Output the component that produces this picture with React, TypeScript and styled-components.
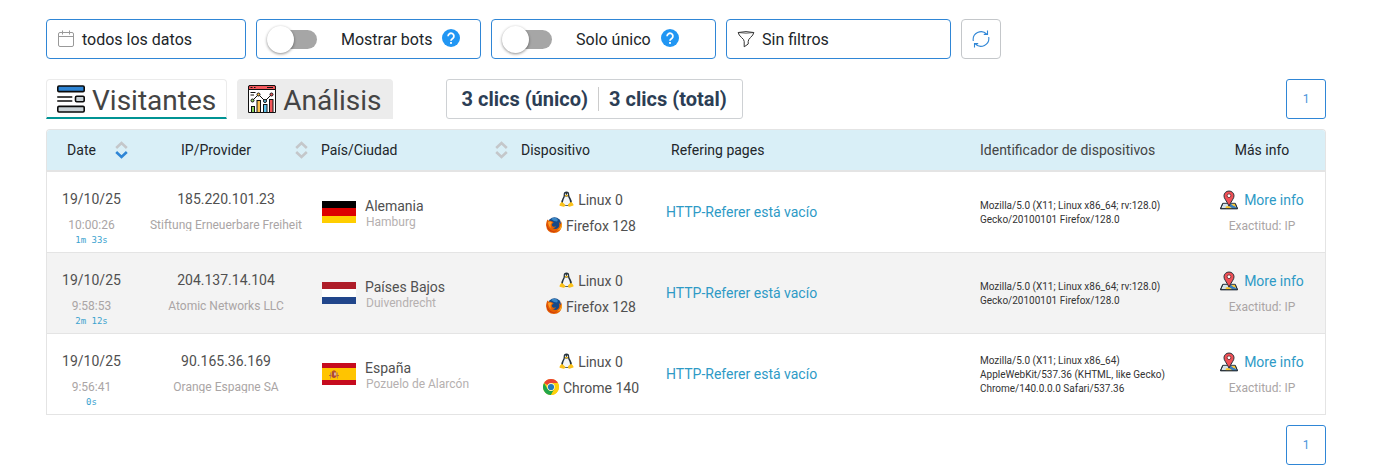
import React from "react";
import styled, { createGlobalStyle, css } from "styled-components";

const GlobalStyle = createGlobalStyle`
  *, *::before, *::after { box-sizing: border-box; }
  body {
    margin: 0;
    background: #fff;
    color: #505050;
    font-family: Roboto, "Liberation Sans", sans-serif;
    font-size: 14px;
  }
  button, input { font: inherit; }
  svg { display: block; flex: none; }
`;

const Page = styled.main`
  display: flex;
  flex-direction: column;
  padding: 19px 52px 10px 46px;
`;

const Toolbar = styled.div`
  display: flex;
  gap: 10px;
`;

const field = css`
  display: flex;
  align-items: center;
  height: 40px;
  border: 1px solid #2f86d6;
  border-radius: 4px;
  background: #fff;
  color: #212529;
  font-size: 16px;
`;

const FieldButton = styled.button<{ $width: number }>`
  ${field}
  width: ${(p) => p.$width}px;
  gap: 7px;
  padding: 0 10px;
  cursor: pointer;
`;

const SwitchField = styled.div`
  ${field}
  width: 225px;
  padding: 0 12px;
`;

const SwitchLabel = styled.label`
  display: flex;
  align-items: center;
  gap: 24px;
  cursor: pointer;
`;

const Switch = styled.input`
  appearance: none;
  position: relative;
  width: 48px;
  height: 19px;
  margin: 0;
  border-radius: 10px;
  background: #a6a6a6;
  cursor: pointer;

  &::before {
    content: "";
    position: absolute;
    top: -4px;
    left: -2px;
    width: 27px;
    height: 27px;
    border-radius: 50%;
    background: #fff;
    box-shadow: 0 1px 3px rgba(0, 0, 0, 0.45);
  }
  &:checked { background: #2f86d6; }
  &:checked::before { left: 23px; }
`;

const HelpButton = styled.button`
  margin: 0 0 2px 10px;
  padding: 0;
  border: 0;
  background: none;
  cursor: pointer;
`;

const RefreshButton = styled.button`
  display: grid;
  place-items: center;
  width: 40px;
  height: 40px;
  padding: 0;
  border: 1px solid #c4c7ca;
  border-radius: 4px;
  background: #fff;
  cursor: pointer;
`;

const ViewBar = styled.div`
  display: flex;
  align-items: center;
  gap: 10px;
  margin: 20px 0 10px;
`;

const Tab = styled.button<{ $active?: boolean }>`
  display: flex;
  align-items: center;
  gap: 7px;
  height: 40px;
  padding: 0 10px;
  border: 1px solid ${(p) => (p.$active ? "#ebebeb" : "#ececec")};
  border-bottom: 2px solid ${(p) => (p.$active ? "#009494" : "#ececec")};
  border-radius: 4px 4px 0 0;
  background: ${(p) => (p.$active ? "#fff" : "#ececec")};
  color: #444;
  font-size: 28px;
  line-height: 33px;
  cursor: pointer;

  span { padding-top: 4px; }
`;

const Totals = styled.div`
  display: flex;
  align-items: center;
  height: 40px;
  margin-left: 43px;
  padding: 0 5px;
  border: 1px solid #ced1d4;
  border-radius: 3px;
  color: #2c3e55;
  font-size: 20px;
  font-weight: 700;
`;

const Total = styled.span`
  padding: 0 10px;
  line-height: 24px;
  & + & { border-left: 1px solid #ccc; }
`;

const PageLink = styled.a`
  display: grid;
  place-items: center;
  width: 40px;
  height: 40px;
  margin-left: auto;
  border: 1px solid #2f86d6;
  border-radius: 3px;
  color: #4a95dc;
  font-size: 12px;
  text-decoration: none;
`;

const Frame = styled.div`
  margin-bottom: 10px;
  border: 1px solid #e4e4e4;
  border-bottom: 0;
  border-radius: 4px 4px 0 0;
  overflow: hidden;
`;

const Table = styled.table`
  width: 100%;
  table-layout: fixed;
  border-collapse: separate;
  border-spacing: 0;
`;

const Head = styled.th<{ $width?: number; $align?: string; $soft?: boolean }>`
  width: ${(p) => (p.$width ? `${p.$width}px` : "auto")};
  height: 42px;
  padding: 0 5px;
  border-bottom: 2px solid #e4e4e4;
  background: #d9eff7;
  color: ${(p) => (p.$soft ? "#444" : "#212529")};
  font-weight: 400;
  text-align: ${(p) => p.$align || "left"};
`;

const SortButton = styled.button<{ $align?: string }>`
  display: flex;
  align-items: center;
  gap: 4px;
  width: 100%;
  padding: 0 3px 0 0;
  border: 0;
  background: none;
  color: inherit;
  cursor: pointer;

  span { flex: 1; text-align: ${(p) => p.$align || "left"}; }
`;

const Row = styled.tr`
  height: 81px;
  &:nth-child(even) { background: #f3f3f3; }
`;

const Cell = styled.td<{ $top?: number; $center?: boolean }>`
  padding: ${(p) => p.$top || 0}px 0 0;
  border-bottom: 1px solid #e4e4e4;
  vertical-align: ${(p) => (p.$top ? "top" : "middle")};
  text-align: ${(p) => (p.$center ? "center" : "left")};
`;

const Primary = styled.div`
  line-height: 26px;
`;

const Secondary = styled.div`
  height: 13px;
  margin-top: 6px;
  overflow: hidden;
  color: #aaa5a5;
  font-size: 12px;
  line-height: 14px;
  white-space: nowrap;
`;

const Duration = styled.div`
  margin-top: 2px;
  color: #3ba3cf;
  font: 9px/14px "DejaVu Sans Mono", monospace;
`;

const Place = styled.div`
  display: flex;
  align-items: center;
  gap: 9px;
  padding-left: 6px;
`;

const Country = styled.div`
  padding-top: 2px;
  line-height: 18px;
`;

const City = styled.div`
  padding-left: 1px;
  color: #b5b0b0;
  font-size: 12px;
  line-height: 14px;
`;

const IconLine = styled.div`
  display: flex;
  align-items: center;
  justify-content: center;
  gap: 4px;
  line-height: 26px;

  svg { margin-bottom: 2px; }
`;

const Link = styled.a`
  color: #2e9ac6;
  text-decoration: none;
`;

const MapLink = styled(Link)`
  display: flex;
  align-items: center;
  justify-content: center;
  gap: 6px;
  line-height: 26px;
`;

const Agent = styled.div`
  width: 200px;
  padding: 2px 0 0 5px;
  color: #333;
  font-size: 10px;
  line-height: 14px;
`;

const CalendarIcon = () => (
  <svg width="18" height="18" viewBox="0 0 18 18" fill="none" stroke="#999">
    <rect x="1.5" y="2.5" width="15" height="14" rx="1.5" />
    <path d="M1.5 6.5h15M5.5 .5v4M12.5 .5v4" />
  </svg>
);

const FunnelIcon = () => (
  <svg width="18" height="18" viewBox="0 0 18 18" fill="none" stroke="#333" strokeLinejoin="round">
    <path d="M1.200 2.500Q9 .8 16.800 2.500Q16.400 5 13.500 7.500Q11.200 9.500 11.200 11.500V14L7.200 16.800V11.500Q7.200 9.500 4.500 7.500Q1.600 5 1.200 2.500Z" />
    <path d="M1.200 2.500Q9 4 16.800 2.500" strokeWidth=".7" />
  </svg>
);

const RefreshIcon = () => (
  <svg width="18" height="20" viewBox="0 0 18 20" fill="none" stroke="#2f86d6" strokeWidth="1.100">
    <path d="M1.300 12A7.900 7.900 0 0 1 14.800 5.200M15.500 1.500V5.400H11.800M16.700 8A7.900 7.900 0 0 1 3.200 14.800M2.500 18.500V14.600H6.200" />
  </svg>
);

const HelpIcon = () => (
  <svg width="18" height="18" viewBox="0 0 18 18">
    <circle cx="9" cy="9" r="9" fill="#2196f3" />
    <path d="M6.1 7.2a2.9 2.9 0 1 1 4.6 2.3C9.600 10.200 9 10.600 9 11.800" fill="none" stroke="#fff" strokeWidth="1.8" />
    <rect x="8.100" y="13" width="1.800" height="1.900" fill="#fff" />
  </svg>
);

const ListIcon = () => (
  <svg width="28" height="28" viewBox="0 0 28 28" stroke="#0b0b0b" strokeWidth="1.6" strokeLinecap="round">
    <rect x=".8" y="1" width="26.400" height="5.600" rx="1.200" fill="#2f86d6" />
    <rect x=".8" y="21.400" width="26.400" height="5.600" rx="1.200" fill="#c9d1d5" />
    <rect x="18.500" y="11.200" width="8.700" height="5.600" rx="1.200" fill="#c9d1d5" />
    <path d="M.8 12H14.700M.8 16H14.700" />
  </svg>
);

const ChartIcon = () => (
  <svg width="28" height="28" viewBox="0 0 28 28" stroke="#111" strokeWidth="1">
    <path d="M.5 27.500V2Q.5.5 2 .5H26Q27.500.5 27.500 2V27.500Z" fill="#fff" />
    <path d="M.5 4.500V2Q.5.5 2 .5H26Q27.500.5 27.500 2V4.500Z" fill="#f4585c" />
    <path d="M2.500 2.500h2M6 2.500h1.500M19 2.500h6" />
    <path d="M2.500 7.500h5M2.500 10h3.500" />
    <rect x="3.500" y="21.500" width="3" height="6" fill="#8bd35b" />
    <rect x="9" y="15.500" width="3.500" height="12" fill="#fbc34f" />
    <rect x="15.500" y="19.500" width="3.500" height="8" fill="#5fc4ee" />
    <rect x="21.500" y="14.500" width="3.500" height="13" fill="#f4585c" />
    <path d="M4.500 15.500L10.500 9.500L17 16L23.500 9.500" fill="none" />
    <circle cx="4.500" cy="15.500" r="1.500" fill="#8bd35b" />
    <circle cx="10.500" cy="9.500" r="1.500" fill="#fbc34f" />
    <circle cx="17" cy="16" r="1.500" fill="#5fc4ee" />
    <circle cx="23.500" cy="9.500" r="1.500" fill="#f4585c" />
  </svg>
);

const SortIcon = ({ down }: { down?: boolean }) => (
  <svg width="13" height="18" viewBox="0 0 13 18" fill="none" strokeWidth="2.600">
    <path d="M1.200 7L6.500 2L11.800 7" stroke="#c4c7ca" />
    <path d="M1.200 11L6.500 16L11.800 11" stroke={down ? "#2f86d6" : "#c4c7ca"} />
  </svg>
);

const LinuxIcon = () => (
  <svg width="15" height="16" viewBox="0 0 16 17">
    <path d="M5 3.500Q5 .5 8 .5T10.800 3.500Q10.800 5.500 12.400 7.700T13.700 14L12 16H4L2.300 14Q2 10.500 3.700 8T5 3.500Z" fill="#25323c" />
    <path d="M6.200 5.500Q8 6.500 9.700 5.500Q10 7.200 11 8.800T11.700 14Q8 16.500 4.600 14Q3.800 11 5 8.800T6.200 5.500Z" fill="#f4f6f7" />
    <circle cx="6.900" cy="3.400" r=".7" fill="#fff" />
    <circle cx="9" cy="3.400" r=".7" fill="#fff" />
    <path d="M6 4.600L8 3.900L9.800 4.600L8 6Z" fill="#fbc21b" />
    <path d="M3 11.500L7 15Q6.500 17 4.800 16.800L.6 15.700Q.3 14.600 1.200 13.200ZM13 11.500L9.600 14Q9.200 17 11.200 16.800L15.400 15.500Q15.900 14.500 14.800 13.200Z" fill="#fbc21b" />
  </svg>
);

const FirefoxIcon = () => (
  <svg width="16" height="16" viewBox="0 0 16 16">
    <circle cx="8.500" cy="7" r="6.700" fill="#174a88" />
    <path d="M5 2Q8-.3 11 1.500Q12.500 3 11 4.500L8 4Z" fill="#3986c6" />
    <path d="M1.400 2.500L2.900 3.800Q4.500 3.300 5.700 4.300L7.700 5.200L6.200 6.700Q5.300 8 6.500 9.200Q8 10.300 10 9.300Q9 11.500 6.800 11Q9.600 13.200 12.200 10.800Q14.100 8.800 12.800 5L15 7Q15.300 4.900 13.800 2.800Q16.500 5.500 15.900 9.200Q14.700 15.700 8 16Q.7 15.600 .1 8.500Q-.1 5.500 1.400 2.500Z" fill="#e66000" />
    <path d="M1.400 4Q.4 9 3.500 12.200Q7.200 15.400 11.500 13.300Q8 16 4.300 13.900Q.3 11.200 .7 7Z" fill="#c93612" />
    <path d="M15.200 6.500Q15 11.700 10.500 13.500Q15.800 13 15.900 8Z" fill="#ffb31c" />
    <path d="M2 5Q4.500 3.800 6 5.500L4.600 7.500Q4 9.800 6 11.500Q2.500 10.200 2 5Z" fill="#ff9c27" />
  </svg>
);

const ChromeIcon = () => (
  <svg width="16" height="16" viewBox="0 0 16 16">
    <circle cx="8" cy="8" r="8" fill="#fdd00c" />
    <path d="M1.070 4A8 8 0 0 1 14.930 4H8A4 4 0 0 0 4.540 6Z" fill="#ea4335" />
    <path d="M1.070 4L4.540 10A4 4 0 0 0 11.460 10L8 16A8 8 0 0 1 1.070 4Z" fill="#21a64a" />
    <path d="M14.930 4H8A4 4 0 0 1 11.460 10L8 16A8 8 0 0 0 14.930 4Z" fill="#fdd00c" />
    <circle cx="8" cy="8" r="3.700" fill="#fff" />
    <circle cx="8" cy="8" r="3.100" fill="#237bbd" />
  </svg>
);

const MapIcon = () => (
  <svg width="18" height="20" viewBox="0 0 19 20" stroke="#222b35" strokeWidth="1" strokeLinejoin="round">
    <path d="M3 13.500H16L18.500 19.200H.5Z" fill="#d5e2e9" />
    <path d="M8 13.500H11Q13 16 17 17L18.500 19.200H14Q10 18.500 8 13.500Z" fill="#3c7fba" stroke="none" />
    <path d="M6 17Q9 15 13 19H6Z" fill="#fbc72f" stroke="none" />
    <path d="M12 14.500Q14 16.500 17 17L16 14Z" fill="#fbc72f" stroke="none" />
    <path d="M3 13.500L.5 19.200H18.500L16 13.500" fill="none" />
    <path d="M9.500 16.500Q8.500 14 5.800 9.800Q4.200 7.500 4.200 5.500A5.300 5 0 0 1 14.800 5.500Q14.800 7.500 13.200 9.800Q10.500 14 9.500 16.500Z" fill="#f25056" />
    <circle cx="9.500" cy="5.500" r="2" fill="#fff" stroke="#7a3036" />
  </svg>
);

const Flag = ({ code }: { code: string }) => {
  const bands: Record<string, [string, number][]> = {
    de: [["#000", 7], ["#d00", 8], ["#ffce00", 7]],
    nl: [["#ae1c28", 7], ["#fff", 8], ["#21468b", 7]],
    es: [["#c60b1e", 5], ["#ffc400", 12], ["#c60b1e", 5]],
  };
  let y = 0;
  return (
    <svg width="34" height="22" viewBox="0 0 34 22" role="img" aria-label={code}>
      {bands[code].map(([fill, height], i) => {
        const top = y;
        y += height;
        return <rect key={i} y={top} width="34" height={height} fill={fill} />;
      })}
      {code === "es" && (
        <g>
          <path d="M9.500 9Q12 5.500 14.500 9Z" fill="#b5522c" />
          <rect x="8" y="9.500" width="1" height="6" fill="#b98a55" />
          <rect x="15" y="9.500" width="1" height="6" fill="#b98a55" />
          <path d="M9.700 9H14.300V13.500Q12 16.500 9.700 13.500Z" fill="#b04a35" />
          <rect x="12" y="9.500" width="2" height="3" fill="#d5b0a0" />
          <rect x="7" y="12" width="2.500" height="1" fill="#c0603b" />
          <rect x="14.500" y="12" width="2.500" height="1" fill="#c0603b" />
        </g>
      )}
    </svg>
  );
};

const FIREFOX_AGENT = "Mozilla/5.0 (X11; Linux x86_64; rv:128.0) Gecko/20100101 Firefox/128.0";

const visits = [
  { time: "10:00:26", duration: "1m 33s", ip: "185.220.101.23", provider: "Stiftung Erneuerbare Freiheit", code: "de", country: "Alemania", city: "Hamburg", browser: "Firefox 128", agent: FIREFOX_AGENT },
  { time: "9:58:53", duration: "2m 12s", ip: "204.137.14.104", provider: "Atomic Networks LLC", code: "nl", country: "Países Bajos", city: "Duivendrecht", browser: "Firefox 128", agent: FIREFOX_AGENT },
  { time: "9:56:41", duration: "0s", ip: "90.165.36.169", provider: "Orange Espagne SA", code: "es", country: "España", city: "Pozuelo de Alarcón", browser: "Chrome 140", agent: "Mozilla/5.0 (X11; Linux x86_64) AppleWebKit/537.36 (KHTML, like Gecko) Chrome/140.0.0.0 Safari/537.36" },
];

const SwitchBox = ({ label }: { label: string }) => (
  <SwitchField>
    <SwitchLabel>
      <Switch type="checkbox" role="switch" />
      {label}
    </SwitchLabel>
    <HelpButton type="button" aria-label={`Ayuda: ${label}`}>
      <HelpIcon />
    </HelpButton>
  </SwitchField>
);

const App: React.FC = () => (
  <>
    <GlobalStyle />
    <Page>
      <Toolbar>
        <FieldButton type="button" $width={200}><CalendarIcon />todos los datos</FieldButton>
        <SwitchBox label="Mostrar bots" />
        <SwitchBox label="Solo único" />
        <FieldButton type="button" $width={225}><FunnelIcon />Sin filtros</FieldButton>
        <RefreshButton type="button" aria-label="Actualizar"><RefreshIcon /></RefreshButton>
      </Toolbar>

      <ViewBar>
        <Tab type="button" $active><ListIcon /><span>Visitantes</span></Tab>
        <Tab type="button"><ChartIcon /><span>Análisis</span></Tab>
        <Totals>
          <Total>3 clics (único)</Total>
          <Total>3 clics (total)</Total>
        </Totals>
        <PageLink href="#1">1</PageLink>
      </ViewBar>

      <Frame>
        <Table>
          <thead>
            <tr>
              <Head $width={89}><SortButton type="button" $align="center"><span>Date</span><SortIcon down /></SortButton></Head>
              <Head $width={180}><SortButton type="button" $align="center"><span>IP/Provider</span><SortIcon /></SortButton></Head>
              <Head $width={200}><SortButton type="button"><span>País/Ciudad</span><SortIcon /></SortButton></Head>
              <Head $width={150}>Dispositivo</Head>
              <Head>Refering pages</Head>
              <Head $width={224} $soft>Identificador de dispositivos</Head>
              <Head $width={126} $align="center">Más info</Head>
            </tr>
          </thead>
          <tbody>
            {visits.map((v) => (
              <Row key={v.ip}>
                <Cell $top={14} $center>
                  <Primary>19/10/25</Primary>
                  <Secondary>{v.time}</Secondary>
                  <Duration>{v.duration}</Duration>
                </Cell>
                <Cell $top={14} $center>
                  <Primary>{v.ip}</Primary>
                  <Secondary>{v.provider}</Secondary>
                </Cell>
                <Cell>
                  <Place>
                    <Flag code={v.code} />
                    <div>
                      <Country>{v.country}</Country>
                      <City>{v.city}</City>
                    </div>
                  </Place>
                </Cell>
                <Cell $top={15}>
                  <IconLine><LinuxIcon />Linux 0</IconLine>
                  <IconLine>{v.browser.startsWith("Chrome") ? <ChromeIcon /> : <FirefoxIcon />}{v.browser}</IconLine>
                </Cell>
                <Cell><Link href="#referer">HTTP-Referer está vacío</Link></Cell>
                <Cell><Agent>{v.agent}</Agent></Cell>
                <Cell $top={15} $center>
                  <MapLink href="#info"><MapIcon />More info</MapLink>
                  <Secondary>Exactitud: IP</Secondary>
                </Cell>
              </Row>
            ))}
          </tbody>
        </Table>
      </Frame>

      <PageLink href="#1">1</PageLink>
    </Page>
  </>
);

export default App;
